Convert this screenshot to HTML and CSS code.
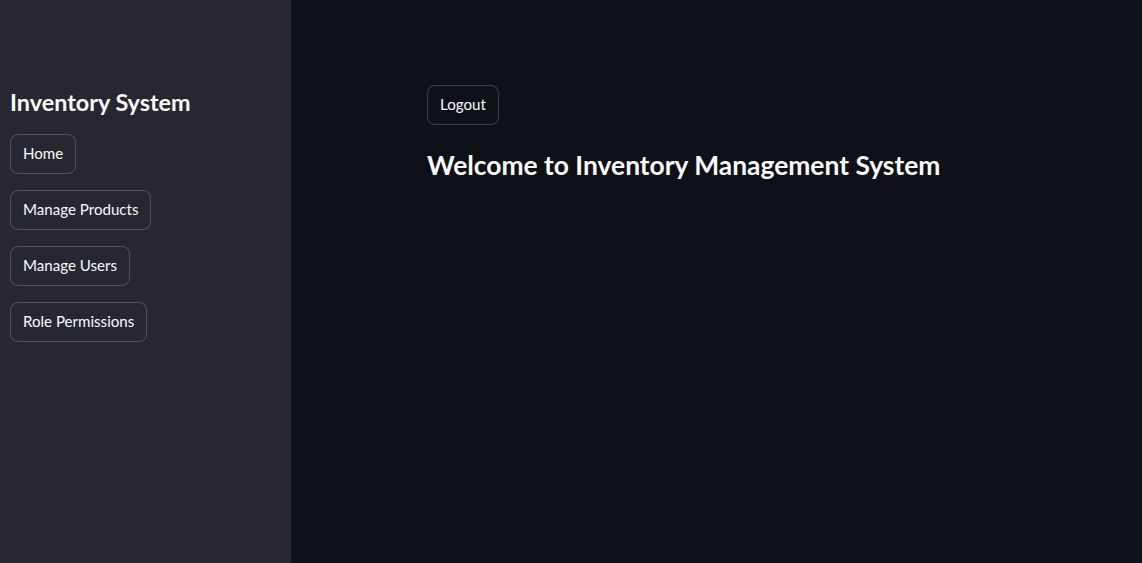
FILE: index.html
```html
<!DOCTYPE html>
<html>
<head>
<meta charset="utf-8">
<link rel="stylesheet" href="styles.css">
</head>
<body>
<div class="app">
  <aside class="sidebar">
    <h2 class="side-title">Inventory System</h2>
    <div class="nav">
      <button class="btn">Home</button>
      <button class="btn">Manage Products</button>
      <button class="btn">Manage Users</button>
      <button class="btn">Role Permissions</button>
    </div>
  </aside>
  <main class="main">
    <div class="content">
      <button class="btn btn-main">Logout</button>
      <h1 class="heading">Welcome to Inventory Management System</h1>
    </div>
  </main>
</div>
</body>
</html>
```
FILE: styles.css
```css
* { box-sizing: border-box; }
html, body { margin: 0; height: 100%; }
body {
  font-family: Lato, "Noto Sans", sans-serif;
  color: #fafafa;
  background: #0e1117;
}
.app { display: flex; height: 563px; }
.sidebar {
  width: 291px;
  flex: none;
  background: #262730;
  padding: 87px 10px 0 10px;
}
.side-title {
  margin: 0 0 17px 0;
  font-size: 23.4px;
  font-weight: 700;
  line-height: 30px;
}
.nav { display: flex; flex-direction: column; align-items: flex-start; gap: 16px; }
.btn {
  font-family: inherit;
  font-size: 15.1px;
  color: #fafafa;
  background: #262730;
  border: 1px solid rgba(250,250,250,0.2);
  border-radius: 8px;
  height: 40px;
  padding: 0 12px 2px 12px;
  line-height: 36px;
}
.main { flex: 1; background: #0e1117; }
.content { padding: 85px 0 0 136px; display: flex; flex-direction: column; align-items: flex-start; }
.btn-main { background: #0e1117; }
.heading {
  margin: 25px 0 0 0;
  font-size: 26.4px;
  font-weight: 700;
  line-height: 30px;
}
```
